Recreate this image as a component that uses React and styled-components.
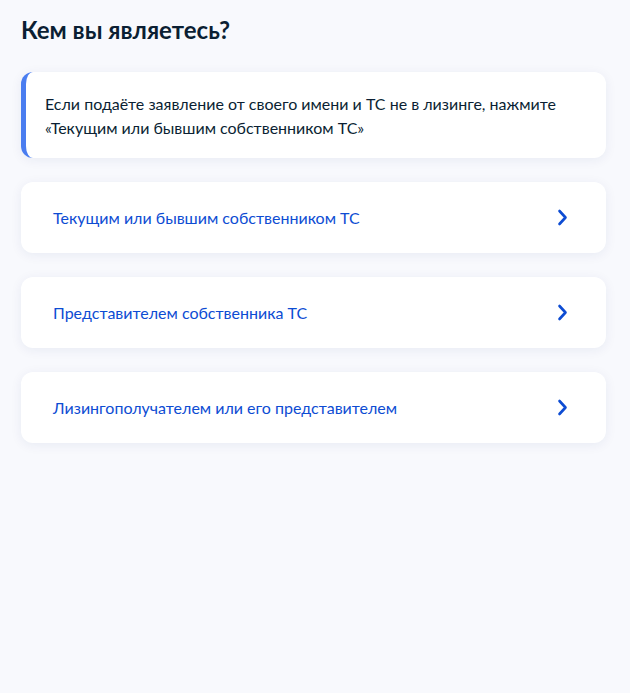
import React from "react";
import styled, { createGlobalStyle } from "styled-components";

const GlobalStyle = createGlobalStyle`
  html, body {
    margin: 0;
    padding: 0;
    background: #f8f9fd;
  }
  body {
    font-family: Lato, "Noto Sans", sans-serif;
    color: #0b1f33;
  }
`;

const Page = styled.div`
  min-height: 693px;
  box-sizing: border-box;
  padding: 14px 24px 40px 21px;
  background: #f8f9fd;
`;

const Title = styled.h1`
  margin: 0 0 26px;
  font-size: 24px;
  line-height: 32px;
  font-weight: 700;
  color: #0b1f33;
`;

const List = styled.div`
  display: flex;
  flex-direction: column;
  gap: 24px;
`;

const InfoCard = styled.div`
  background: #fff;
  border-radius: 12px;
  border-left: 5px solid #4a7df0;
  box-shadow: 0 2px 12px rgba(0, 40, 120, 0.07);
  padding: 20px 24px 18px 19px;
  font-size: 16px;
  line-height: 24px;
  color: #0b1f33;
`;

const ChoiceCard = styled.div`
  display: flex;
  align-items: center;
  justify-content: space-between;
  height: 71px;
  box-sizing: border-box;
  padding: 0 37px 0 32px;
  background: #fff;
  border-radius: 12px;
  box-shadow: 0 2px 12px rgba(0, 40, 120, 0.07);
  cursor: pointer;
`;

const ChoiceText = styled.span`
  font-size: 16px;
  line-height: 24px;
  color: #0d4cd3;
`;

const Chevron = () => (
  <svg width="12" height="17" viewBox="0 0 12 17" fill="none">
    <path d="M2.5 2L8.5 8.5L2.5 15" stroke="#0d4cd3" strokeWidth="2.6" strokeLinecap="round" strokeLinejoin="round" />
  </svg>
);

const choices = [
  "Текущим или бывшим собственником ТС",
  "Представителем собственника ТС",
  "Лизингополучателем или его представителем",
];

export default function App() {
  return (
    <Page>
      <GlobalStyle />
      <Title>Кем вы являетесь?</Title>
      <List>
        <InfoCard>
          Если подаёте заявление от своего имени и ТС не в лизинге, нажмите
          <br />
          «Текущим или бывшим собственником ТС»
        </InfoCard>
        {choices.map((c) => (
          <ChoiceCard key={c}>
            <ChoiceText>{c}</ChoiceText>
            <Chevron />
          </ChoiceCard>
        ))}
      </List>
    </Page>
  );
}
